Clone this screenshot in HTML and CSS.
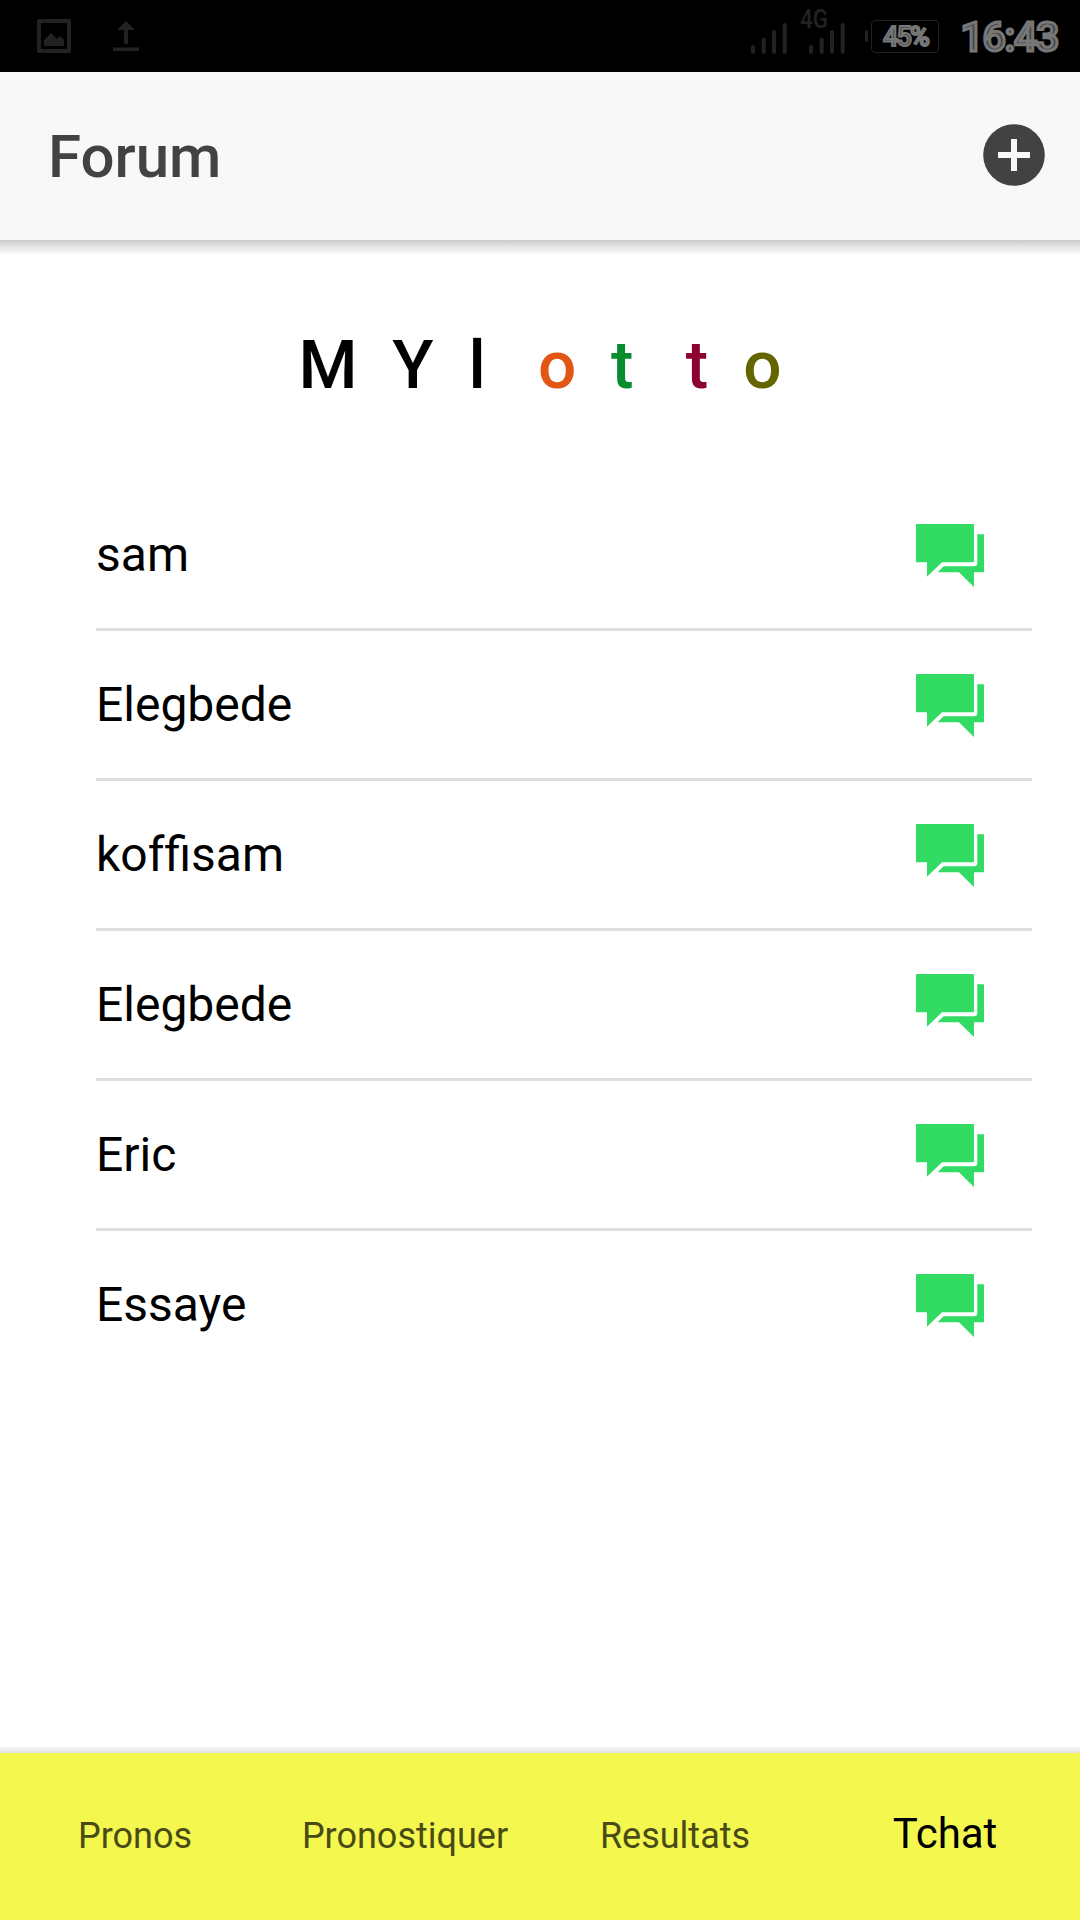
FILE: index.html
```
<!DOCTYPE html>
<html lang="fr">

<head>
    <meta charset="utf-8">
    <title>Forum</title>
    <link rel="stylesheet" href="styles.css">
</head>

<body>

    <!-- Chat icon shared by the rows -->
    <svg class="defs">
        <symbol id="chatboxes" viewBox="107 71 205 189">
            <path d="M110 71H278q3 0 3 3V183q0 3-3 3H185L140 229V186H110q-3 0-3-3V74q0-3 3-3z" />
            <path d="M291 102H309q3 0 3 3V213q0 3-3 3H281V260L236 216H172L190 198H281q10 0 10-10z" />
        </symbol>
    </svg>

    <div class="status-bar">
        <svg class="status-icons" viewBox="0 0 240 72">
            <rect x="39" y="21" width="30" height="30" />
            <path class="fill" d="M44 46v-6l7-7 6 6 3-3 4 4v6z" />
            <path class="fill" d="M126 21l9 9h-7v14h-4V30h-7zM113 47.500h26v3.500h-26z" />
        </svg>
        <div class="status-right">
            <svg class="signal" viewBox="0 0 100 72">
                <path d="M2 47v5M12.700 39.500V52M23 32V52M33.700 25V52" />
                <path d="M60 47v5M70.700 39.500V52M81 32V52M91.700 25V52" />
                <text x="49" y="28" textLength="28" lengthAdjust="spacingAndGlyphs">4G</text>
            </svg>
            <div class="battery">45%</div>
            <div class="clock">16:43</div>
        </div>
    </div>

    <div class="header">
        <div class="header-title">Forum</div>
        <button class="add-button" title="Ajouter">
            <svg viewBox="0 0 62 62">
                <circle cx="31" cy="31" r="30.800" />
                <path d="M15 31h32M31 15v32" />
            </svg>
        </button>
    </div>
    <div class="header-shadow"></div>

    <div class="content">
        <h1 class="logo">M&nbsp; Y&nbsp; l&nbsp;&nbsp; <span class="orange">o</span>&nbsp; <span class="green">t</span>&nbsp;&nbsp; <span class="purple">t</span>&nbsp; <span class="olive">o</span></h1>
        <ul class="list">
            <li>sam <svg><use href="#chatboxes" /></svg></li>
            <li>Elegbede <svg><use href="#chatboxes" /></svg></li>
            <li>kof&zwnj;fisam <svg><use href="#chatboxes" /></svg></li>
            <li>Elegbede <svg><use href="#chatboxes" /></svg></li>
            <li>Eric <svg><use href="#chatboxes" /></svg></li>
            <li>Essaye <svg><use href="#chatboxes" /></svg></li>
        </ul>
    </div>

    <div class="tabs-shadow"></div>
    <div class="tabs">
        <a class="tab">Pronos</a>
        <a class="tab">Pronostiquer</a>
        <a class="tab">Resultats</a>
        <a class="tab active">Tchat</a>
    </div>

</body>

</html>
```
FILE: styles.css
```
* {
    box-sizing: border-box;
}

body {
    margin: 0;
    height: 1920px;
    display: flex;
    flex-direction: column;
    font-family: Roboto, "Liberation Sans", sans-serif;
    background-color: #fff;
    color: #000;
    overflow: hidden;
}

.defs {
    display: none;
}

/* Status bar */
.status-bar {
    height: 72px;
    background-color: #000;
    display: flex;
    justify-content: space-between;
}

.status-icons {
    width: 240px;
    height: 72px;
    fill: none;
    stroke: #222;
    stroke-width: 4;
    stroke-linejoin: round;
}

.status-icons .fill {
    fill: #222;
    stroke: none;
}

.status-right {
    display: flex;
    align-items: flex-start;
    padding-right: 22px;
}

.signal {
    width: 100px;
    height: 72px;
    fill: #222;
    stroke: #222;
    stroke-width: 4;
    stroke-linecap: round;
}

.signal text {
    font-size: 25px;
    font-weight: 500;
    stroke: none;
}

.battery {
    width: 68px;
    height: 33px;
    margin: 20px 0 0 20px;
    border: 1.5px solid #222;
    border-radius: 4px;
    color: #444;
    font-size: 27px;
    font-weight: 500;
    line-height: 32px;
    text-align: center;
    letter-spacing: -1.8px;
    -webkit-text-stroke: 2px #777;
    position: relative;
}

.battery::before {
    content: "";
    position: absolute;
    left: -7px;
    top: 9px;
    width: 3px;
    height: 12px;
    border-radius: 2px;
    background-color: #222;
}

.clock {
    margin: 14px 0 0 21px;
    color: #444;
    font-size: 41px;
    font-weight: 500;
    line-height: 47px;
    letter-spacing: -1.3px;
    -webkit-text-stroke: 3px #777;
}

/* Header */
.header {
    height: 168px;
    padding: 0 35px 0 48px;
    display: flex;
    align-items: center;
    justify-content: space-between;
    background-color: #f8f8f8;
}

.header-title {
    color: #424242;
    font-size: 60px;
    font-weight: 500;
}

.add-button {
    width: 62px;
    height: 62px;
    padding: 0;
    margin-bottom: 3px;
    border: none;
    background: none;
}

.add-button svg {
    display: block;
    fill: #424242;
    stroke: #f8f8f8;
    stroke-width: 6;
}

.add-button circle {
    stroke: none;
}

.header-shadow {
    height: 15px;
    background: linear-gradient(#cbcbcb, #e2e2e2 40%, #fff);
}

/* Content */
.content {
    flex: 1;
}

.logo {
    margin: 70px 0 76px;
    font-size: 67.5px;
    font-weight: 500;
    line-height: 80px;
    text-align: center;
    word-spacing: 0.65px;
}

.orange {
    color: #e25614;
}

.green {
    color: #088d2e;
}

.purple {
    color: #8b042f;
}

.olive {
    color: #656500;
}

.list {
    list-style: none;
    margin: 0;
    padding: 0 48px 0 96px;
}

.list li {
    height: 150px;
    padding-right: 48px;
    display: flex;
    align-items: center;
    justify-content: space-between;
    border-bottom: 3px solid #dedede;
    font-size: 48px;
}

.list li:last-child {
    border-bottom-color: transparent;
}

.list svg {
    width: 68.3px;
    height: 63px;
    margin-top: 2px;
    fill: #32db64;
}

/* Tabs */
.tabs-shadow {
    height: 6px;
    background: linear-gradient(#f7f7f7, #e0e0e0);
}

.tabs {
    height: 167px;
    padding-bottom: 2px;
    display: flex;
    align-items: center;
    background-color: #f4f84e;
}

.tab {
    flex: 1;
    text-align: center;
    font-size: 36px;
    color: #494b17;
}

.tab.active {
    padding-bottom: 5px;
    font-size: 42px;
    color: #000;
}
```
